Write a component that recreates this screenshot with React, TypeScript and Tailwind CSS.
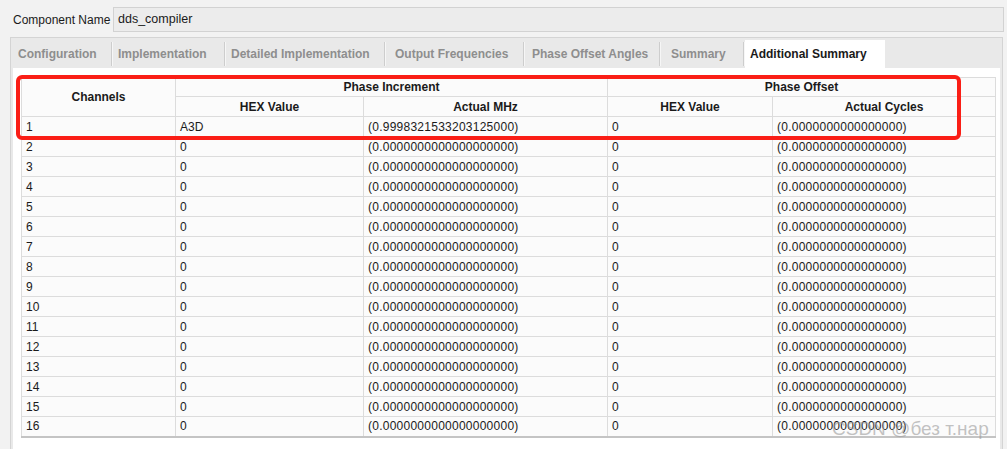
import React from 'react';

const tabs = [
  { label: 'Configuration', w: 'w-[102px]', pl: 'pl-[7px]' },
  { label: 'Implementation', w: 'w-[113px]', pl: 'pl-[5px]' },
  { label: 'Detailed Implementation', w: 'w-[160px]', pl: 'pl-[5px]' },
  { label: 'Output Frequencies', w: 'w-[139px]', pl: 'pl-[9px]' },
  { label: 'Phase Offset Angles', w: 'w-[136px]', pl: 'pl-[7px]' },
  { label: 'Summary', w: 'w-[84px]', pl: 'pl-[10px]' },
];

const zero = '(0.0000000000000000000)';
const zeroCycles = '(0.0000000000000000)';

const rows = Array.from({ length: 16 }, (_, i) => ({
  ch: String(i + 1),
  incHex: i === 0 ? 'A3D' : '0',
  mhz: i === 0 ? '(0.9998321533203125000)' : zero,
  offHex: '0',
  cycles: zeroCycles,
}));

const App: React.FC = () => {
  return (
    <div
      className="relative w-[1007px] h-[449px] overflow-hidden bg-[#f2f2f2] text-[12px] text-[#1a1a1a]"
      style={{ fontFamily: '"Liberation Sans", Arial, sans-serif' }}
    >
      {/* Component name */}
      <div className="flex items-center h-[37px] pt-[7px] pb-[5px]">
        <span className="pl-[13px] w-[113px] whitespace-nowrap">Component Name</span>
        <div className="w-[891px] h-[25px] border border-[#d2d2d2] bg-[#ececec] flex items-center pl-[4px] text-[12.5px]">
          dds_compiler
        </div>
      </div>

      {/* Tab panel */}
      <div className="ml-[10px] w-[993px] h-[412px] border-t border-l border-r border-[#d4d4d4] bg-[#e9e9e9] flex flex-col">
        <div className="flex h-[30px] pt-[2px]">
          {tabs.map((t) => (
            <div key={t.label} className={`${t.w} flex items-center`}>
              <span className={`${t.pl} flex-1 font-bold text-[#8e8e8e] whitespace-nowrap`}>{t.label}</span>
              <span className="w-[2px] h-[24px] bg-[#cdcdcd] border-r border-[#f6f6f6]" />
            </div>
          ))}
          <div className="w-[140px] bg-white flex items-center pl-[5px] font-bold text-[#1a1a1a] whitespace-nowrap">
            Additional Summary
          </div>
        </div>

        <div className="flex-1 mx-[2px] bg-white pt-[9px] pl-[8px]">
          <table className="border-collapse table-fixed w-[974px] border border-[#c9c9c9] border-b-2 border-b-[#c4c4c4] bg-[#fbfbfb]">
            <colgroup>
              <col className="w-[154px]" />
              <col className="w-[188px]" />
              <col className="w-[244px]" />
              <col className="w-[165px]" />
              <col className="w-[223px]" />
            </colgroup>
            <thead>
              <tr className="h-[19px]">
                <th rowSpan={2} className="border border-[#dcdcdc] font-bold text-center p-0">Channels</th>
                <th colSpan={2} className="border border-[#dcdcdc] font-bold text-center p-0">Phase Increment</th>
                <th colSpan={2} className="border border-[#dcdcdc] font-bold text-center p-0">Phase Offset</th>
              </tr>
              <tr className="h-[20px]">
                <th className="border border-[#dcdcdc] font-bold text-center p-0">HEX Value</th>
                <th className="border border-[#dcdcdc] font-bold text-center p-0">Actual MHz</th>
                <th className="border border-[#dcdcdc] font-bold text-center p-0">HEX Value</th>
                <th className="border border-[#dcdcdc] font-bold text-center p-0">Actual Cycles</th>
              </tr>
            </thead>
            <tbody>
              {rows.map((r) => (
                <tr key={r.ch} className="h-[20px]">
                  <td className="border border-[#dcdcdc] px-[4px] py-0">{r.ch}</td>
                  <td className="border border-[#dcdcdc] px-[4px] py-0">{r.incHex}</td>
                  <td className="border border-[#dcdcdc] px-[4px] py-0 tracking-[0.25px]">{r.mhz}</td>
                  <td className="border border-[#dcdcdc] px-[4px] py-0">{r.offHex}</td>
                  <td className="border border-[#dcdcdc] px-[4px] py-0 tracking-[0.25px]">{r.cycles}</td>
                </tr>
              ))}
            </tbody>
          </table>
        </div>
      </div>

      {/* red annotation box */}
      <div className="absolute left-[16px] top-[75px] w-[945px] h-[65px] border-4 border-[#fa1e16] rounded-[6px] pointer-events-none" />

      {/* watermark */}
      <div className="absolute left-[832px] top-[415px] text-[19px] text-[#9a9a9a]/60 whitespace-nowrap pointer-events-none">
        CSDN @без т.нар
      </div>
    </div>
  );
};

export default App;
